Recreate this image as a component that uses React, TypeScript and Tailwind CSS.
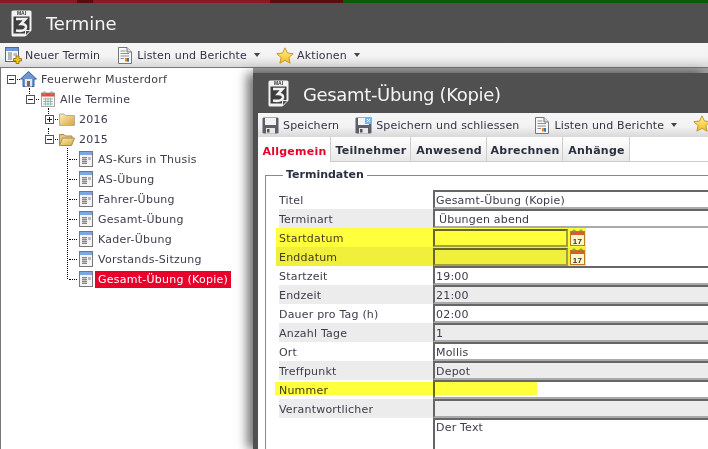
import type { ReactNode } from 'react';

const font = 'font-["DejaVu_Sans",sans-serif]';

function MaiLogo() {
  return (
    <svg width="21" height="27" viewBox="0 0 21 27" className="shrink-0">
      <path d="M2 0.5H19Q20.5 0.5 20.5 2V20L14 26.5H2Q0.5 26.5 0.5 25V2Q0.5 0.5 2 0.5Z" fill="#f2f2f2" />
      <rect x="2.5" y="6.5" width="16" height="17" fill="#3d3d3d" />
      <path d="M14.5 26L20 20.5H14.5Z" fill="#505050" stroke="#f2f2f2" />
      <text x="10.5" y="5.4" textAnchor="middle" fontSize="5" fontWeight="700" fill="#333" fontFamily="Liberation Sans, sans-serif">MAI</text>
      {/* the big 3 of the logo */}
      <path d="M5 9H14.5L10 14Q15.5 14 15 17.5Q14 22 5 20.5" fill="none" stroke="#f2f2f2" strokeWidth="2.6" />
    </svg>
  );
}

function NewIcon() {
  return (
    <svg width="17" height="17" viewBox="0 0 17 17" className="shrink-0">
      <rect x="0.5" y="0.5" width="13" height="14" fill="#f4f6fa" stroke="#55688c" />
      <rect x="1" y="1" width="12" height="3" fill="#6f96d8" />
      <path d="M3 6H7M3 8H7M3 10H7M3 12H7" stroke="#777" />
      <rect x="8.5" y="6" width="3.5" height="3" fill="#bbb" />
      <path d="M11 9H14V11.5H16.5V14H14V16.5H11V14H8.5V11.5H11Z" fill="#f5c518" stroke="#8a6a10" strokeWidth="0.8" />
    </svg>
  );
}

function ReportIcon() {
  return (
    <svg width="14" height="17" viewBox="0 0 14 17" className="mr-[2px] shrink-0">
      <path d="M0.5 0.5H9L13.5 5V16.5H0.5Z" fill="#f8f8f8" stroke="#777" />
      <path d="M9 0.5V5H13.5" fill="#ddd" stroke="#777" />
      <path d="M2.5 4H7.5M2.5 6.5H11M2.5 9H11M2.5 11.5H6" stroke="#8a8fa0" />
      <rect x="7" y="11" width="4" height="3.5" fill="#e08a20" />
      <rect x="9" y="11" width="2" height="3.5" fill="#3a6fc0" />
    </svg>
  );
}

function StarIcon() {
  return (
    <svg width="18" height="17" viewBox="0 0 18 17" className="shrink-0">
      <defs>
        <linearGradient id="star" x1="0" y1="0" x2="0" y2="1">
          <stop offset="0" stopColor="#fff3a0" />
          <stop offset="1" stopColor="#f4bb1c" />
        </linearGradient>
      </defs>
      <path d="M9 0.8L11.4 6L17.2 6.7L12.9 10.5L14.1 16.2L9 13.3L3.9 16.2L5.1 10.5L0.8 6.7L6.6 6Z" fill="url(#star)" stroke="#c49a2a" strokeLinejoin="round" />
    </svg>
  );
}

function DiskIcon({ close }: { close?: boolean }) {
  return (
    <svg width="17" height="17" viewBox="0 0 17 17" className="mr-px shrink-0">
      <path d="M1.5 0.5H15.5L16.5 1.5V15.5L15.5 16.5H1.5L0.5 15.5V1.5Z" fill="#5d6068" />
      <rect x="3" y="1" width="11" height="7" fill="#f2f2f2" />
      <rect x="4" y="11" width="9" height="5.5" fill="#e8e8e8" />
      <rect x="5" y="12" width="2.5" height="3.5" fill="#555" />
      {close && <rect x="10" y="0" width="7" height="7" fill="#7db4e6" />}
      {close && <path d="M12 2L15 5M15 2L12 5" stroke="#fff" />}
    </svg>
  );
}

function HouseIcon() {
  return (
    <svg width="17" height="16" viewBox="0 0 17 16" className="shrink-0">
      <path d="M8.5 0.5L16.5 8H14V15.5H3V8H0.5Z" fill="#6f96cf" stroke="#3d5f94" strokeLinejoin="round" />
      <rect x="5" y="8" width="7" height="7.5" fill="#dfe6f2" />
      <rect x="7" y="10" width="3" height="5.5" fill="#8a6a40" />
    </svg>
  );
}

function CalendarIcon() {
  return (
    <svg width="14" height="16" viewBox="0 0 14 16" className="shrink-0">
      <rect x="0.5" y="2" width="13" height="13.5" fill="#f8f8f8" stroke="#aaa" />
      <rect x="0.5" y="2" width="13" height="3.5" fill="#e8483a" />
      <rect x="2.5" y="0.5" width="2" height="3" fill="#999" />
      <rect x="9.5" y="0.5" width="2" height="3" fill="#999" />
      <path d="M2 8H12M2 10.5H12M2 13H12M4.5 6.5V14.5M7 6.5V14.5M9.5 6.5V14.5" stroke="#7cb0a0" strokeWidth="0.8" />
    </svg>
  );
}

function FolderIcon({ open }: { open?: boolean }) {
  return (
    <svg width="16" height="13" viewBox="0 0 16 13" className="shrink-0">
      <defs>
        <linearGradient id="folder" x1="0" y1="0" x2="1" y2="1">
          <stop offset="0" stopColor="#fbeeb4" />
          <stop offset="1" stopColor="#d9a53c" />
        </linearGradient>
      </defs>
      {open ? (
        <>
          <path d="M0.5 12V1.5H5L6.5 3H13V5" fill="#e7c878" stroke="#a98a4a" />
          <path d="M0.5 12.5L3.5 5H15.5L12.5 12.5Z" fill="url(#folder)" stroke="#a98a4a" />
        </>
      ) : (
        <path d="M0.5 12.5V1H5L6.5 2.5H15.5V12.5Z" fill="url(#folder)" stroke="#b5b09a" />
      )}
    </svg>
  );
}

function EventIcon() {
  return (
    <svg width="14" height="16" viewBox="0 0 14 16" className="shrink-0">
      <rect x="0.5" y="0.5" width="13" height="15" fill="#f5f5f5" stroke="#777" />
      <rect x="1" y="1" width="12" height="3" fill="#7ea6e0" />
      <rect x="3" y="6" width="5" height="7" fill="#888" />
      <rect x="9" y="6" width="3" height="3" fill="#bbb" />
      <path d="M3 7.5H8M3 9.5H8M3 11.5H8" stroke="#ddd" strokeWidth="0.7" />
    </svg>
  );
}

function PickerIcon() {
  return (
    <svg width="15" height="17" viewBox="0 0 15 17" className="shrink-0">
      <rect x="0.5" y="2.5" width="14" height="14" fill="#fdf6c8" stroke="#c07a20" />
      <rect x="1" y="3" width="13" height="3" fill="#e4572e" />
      <circle cx="4" cy="2.5" r="1.5" fill="none" stroke="#7a8a50" />
      <circle cx="11" cy="2.5" r="1.5" fill="none" stroke="#7a8a50" />
      <text x="7.5" y="14.5" textAnchor="middle" fontSize="8" fontWeight="700" fill="#333" fontFamily="Liberation Sans, sans-serif">17</text>
    </svg>
  );
}

function Caret() {
  return <span className="ml-[4px] h-0 w-0 border-x-[3.5px] border-t-[4px] border-x-transparent border-t-[#444]" />;
}

function ToolButton({ icon, label, caret }: { icon: ReactNode; label: string; caret?: boolean }) {
  return (
    <div className="flex shrink-0 items-center gap-[3px] whitespace-nowrap">
      {icon}
      <span className="pt-[3px]">{label}</span>
      {caret && <Caret />}
    </div>
  );
}

function Toolbar({ children }: { children: ReactNode }) {
  return (
    <div className="flex h-[24px] items-center overflow-hidden bg-[linear-gradient(#f6f6f6_0%,#f3f3f3_55%,#d8d8d8_100%)] pl-[4px] text-[11px] tracking-[0.15px] text-[#333344]">
      {children}
    </div>
  );
}

function ToggleBox({ plus }: { plus?: boolean }) {
  return (
    <span className="relative h-[9px] w-[9px] shrink-0 border border-[#555] bg-white">
      <span className="absolute top-[3px] left-[1px] h-px w-[5px] bg-[#222]" />
      {plus && <span className="absolute top-[1px] left-[3px] h-[5px] w-px bg-[#222]" />}
    </span>
  );
}

function TreeRow({ indent, toggle, icon, label, selected }: { indent: string; toggle?: ReactNode; icon: ReactNode; label: string; selected?: boolean }) {
  return (
    <div className={`flex h-[20px] items-center ${indent}`}>
      {toggle ?? <span className="w-[4px] shrink-0" />}
      <span className={`ml-px shrink-0 border-t border-dotted border-black ${toggle ? 'w-[3px]' : 'w-[8px]'}`} />
      <span className="flex w-[17px] shrink-0 justify-center">{icon}</span>
      <span className={`ml-px whitespace-nowrap px-[3px] py-px leading-[15px] ${selected ? 'bg-[#e8002b] text-white' : ''}`}>{label}</span>
    </div>
  );
}

const rows: { label: string; value?: string; kind?: 'date' | 'select'; readOnly?: boolean }[] = [
  { label: 'Titel', value: 'Gesamt-Übung (Kopie)' },
  { label: 'Terminart', value: 'Übungen abend', kind: 'select' },
  { label: 'Startdatum', kind: 'date' },
  { label: 'Enddatum', kind: 'date' },
  { label: 'Startzeit', value: '19:00' },
  { label: 'Endzeit', value: '21:00', readOnly: true },
  { label: 'Dauer pro Tag (h)', value: '02:00' },
  { label: 'Anzahl Tage', value: '1', readOnly: true },
  { label: 'Ort', value: 'Mollis' },
  { label: 'Treffpunkt', value: 'Depot', readOnly: true },
  { label: 'Nummer' },
  { label: 'Verantwortlicher', readOnly: true },
];

function FormRow({ row, index }: { row: (typeof rows)[number]; index: number }) {
  const odd = index % 2 === 1;
  if (row.kind === 'date') {
    const bg = odd ? 'bg-[#f0f03c]' : 'bg-[#ffff3c]';
    return (
      <div className={`-ml-[3px] flex h-[19px] w-[310px] items-center pl-[3px] ${bg}`}>
        <span className="w-[154px] shrink-0 pt-[3px] text-[#443a22]">{row.label}</span>
        <span className="h-[18px] w-[135px] shrink-0 border-2 border-t-[#66662a] border-r-[#a0a040] border-b-[#a0a040] border-l-[#66662a]" />
        <span className="ml-[2px]"><PickerIcon /></span>
      </div>
    );
  }
  return (
    <div className="flex h-[19px] items-center">
      <span className={`flex h-full w-[154px] shrink-0 items-center pt-[3px] ${odd ? 'bg-[#ececec]' : ''}`}>{row.label}</span>
      <span className={`flex h-[19px] flex-1 items-center border-2 border-r-0 border-t-[#666] border-b-[#aaa] border-l-[#666] pt-[3px] ${row.readOnly ? 'bg-[#ececec]' : 'bg-white'} ${row.kind === 'select' ? 'pl-[4px]' : 'pl-px'}`}>
        {row.value}
      </span>
    </div>
  );
}

const sideTab = 'flex items-center justify-center border-r border-b border-[#ccc] bg-[linear-gradient(#ffffff,#e8e8e8)] pt-[5px]';

function TermWindow() {
  return (
    <div className="absolute top-[73px] left-[253px] h-[376px] w-[455px] bg-[#505050] pl-[5px] shadow-[-6px_0_10px_rgba(0,0,0,0.55),0_-5px_0_#a0a0a0]">
      <div className="flex h-[40px] items-center pl-[10px] text-[18px] text-[#f4f4f4]">
        <MaiLogo />
        <span className="ml-[14px] whitespace-nowrap pt-[3px] tracking-[-0.35px]">Gesamt-Übung (Kopie)</span>
      </div>
      <div className="h-[336px] overflow-hidden bg-white">
        <Toolbar>
          <div className="flex gap-[16px]">
            <ToolButton icon={<DiskIcon />} label="Speichern" />
            <ToolButton icon={<DiskIcon close />} label="Speichern und schliessen" />
            <ToolButton icon={<ReportIcon />} label="Listen und Berichte" caret />
            <StarIcon />
          </div>
        </Toolbar>
        <div className="flex h-[25px] text-[11px] font-bold tracking-[0.25px] text-[#2b3040]">
          <span className="flex w-[73px] items-center justify-center border-r border-[#ccc] pt-[5px] pl-px text-[#e8002b]">Allgemein</span>
          <span className={`w-[80px] pl-px ${sideTab}`}>Teilnehmer</span>
          <span className={`w-[76px] pl-px ${sideTab}`}>Anwesend</span>
          <span className={`w-[76px] pl-px ${sideTab}`}>Abrechnen</span>
          <span className={`w-[67px] pl-px ${sideTab}`}>Anhänge</span>
          <span className="flex-1 border-b border-[#ccc]" />
        </div>
        <div className="relative mt-[13px] ml-[7px] border-t border-l border-[#888] pt-[14px] pl-[13px] text-[11px] tracking-[0.2px] text-[#3c3c4c]">
          <span className="absolute -top-[9px] left-[17px] bg-white px-[3px] text-[11px] leading-[15px] font-bold tracking-normal text-[#2b3040]">Termindaten</span>
          {rows.map((row, i) => (
            <FormRow key={row.label} row={row} index={i} />
          ))}
          <div className="ml-[154px] h-[40px] border-2 border-r-0 border-b-0 border-t-[#666] border-l-[#666] bg-white pl-px leading-[16px]">Der Text</div>
          {/* marker stroke over the Nummer row */}
          <span className="absolute top-[206px] left-[9px] h-[13px] w-[262px] bg-[#ffff3c] mix-blend-multiply" />
        </div>
      </div>
    </div>
  );
}

export default function App() {
  return (
    <div className={`relative h-[449px] w-[708px] overflow-hidden bg-white ${font}`}>
      <div className="flex h-[3px]">
        <div className="w-[77px] bg-[#8a1a20]" />
        <div className="w-[16px] bg-[#5a0a0a]" />
        <div className="w-[177px] bg-[#8a1a20]" />
        <div className="w-[73px] bg-[#5c0c0c]" />
        <div className="flex-1 bg-[#0b5a0b]" />
      </div>
      <div className="flex h-[40px] items-center bg-[#505050] pl-[11px] text-[18px] text-[#f4f4f4]">
        <MaiLogo />
        <span className="ml-[14px] tracking-[-0.1px]">Termine</span>
      </div>
      <Toolbar>
        <div className="ml-px flex gap-[16px]">
          <div className="mr-[2px]">
            <ToolButton icon={<NewIcon />} label="Neuer Termin" />
          </div>
          <ToolButton icon={<ReportIcon />} label="Listen und Berichte" caret />
          <ToolButton icon={<StarIcon />} label="Aktionen" caret />
        </div>
      </Toolbar>
      <div className="relative h-[382px] border-t border-l border-[#777] pt-px text-[11px] tracking-[0.25px] text-[#3c3c4c]">
        <TreeRow indent="pl-[6px]" toggle={<ToggleBox />} icon={<HouseIcon />} label="Feuerwehr Musterdorf" />
        <TreeRow indent="pl-[25px]" toggle={<ToggleBox />} icon={<CalendarIcon />} label="Alle Termine" />
        <TreeRow indent="pl-[44px]" toggle={<ToggleBox plus />} icon={<FolderIcon />} label="2016" />
        <TreeRow indent="pl-[44px]" toggle={<ToggleBox />} icon={<FolderIcon open />} label="2015" />
        <TreeRow indent="pl-[63px]" icon={<EventIcon />} label="AS-Kurs in Thusis" />
        <TreeRow indent="pl-[63px]" icon={<EventIcon />} label="AS-Übung" />
        <TreeRow indent="pl-[63px]" icon={<EventIcon />} label="Fahrer-Übung" />
        <TreeRow indent="pl-[63px]" icon={<EventIcon />} label="Gesamt-Übung" />
        <TreeRow indent="pl-[63px]" icon={<EventIcon />} label="Kader-Übung" />
        <TreeRow indent="pl-[63px]" icon={<EventIcon />} label="Vorstands-Sitzung" />
        <TreeRow indent="pl-[63px]" icon={<EventIcon />} label="Gesamt-Übung (Kopie)" selected />
        {/* vertical connectors of the tree */}
        <span className="absolute top-[20px] left-[28px] h-[6px] border-l border-dotted border-black" />
        <span className="absolute top-[40px] left-[47px] h-[6px] border-l border-dotted border-black" />
        <span className="absolute top-[60px] left-[47px] h-[6px] border-l border-dotted border-black" />
        <span className="absolute top-[80px] left-[66px] h-[131px] border-l border-dotted border-black" />
      </div>
      <TermWindow />
    </div>
  );
}
